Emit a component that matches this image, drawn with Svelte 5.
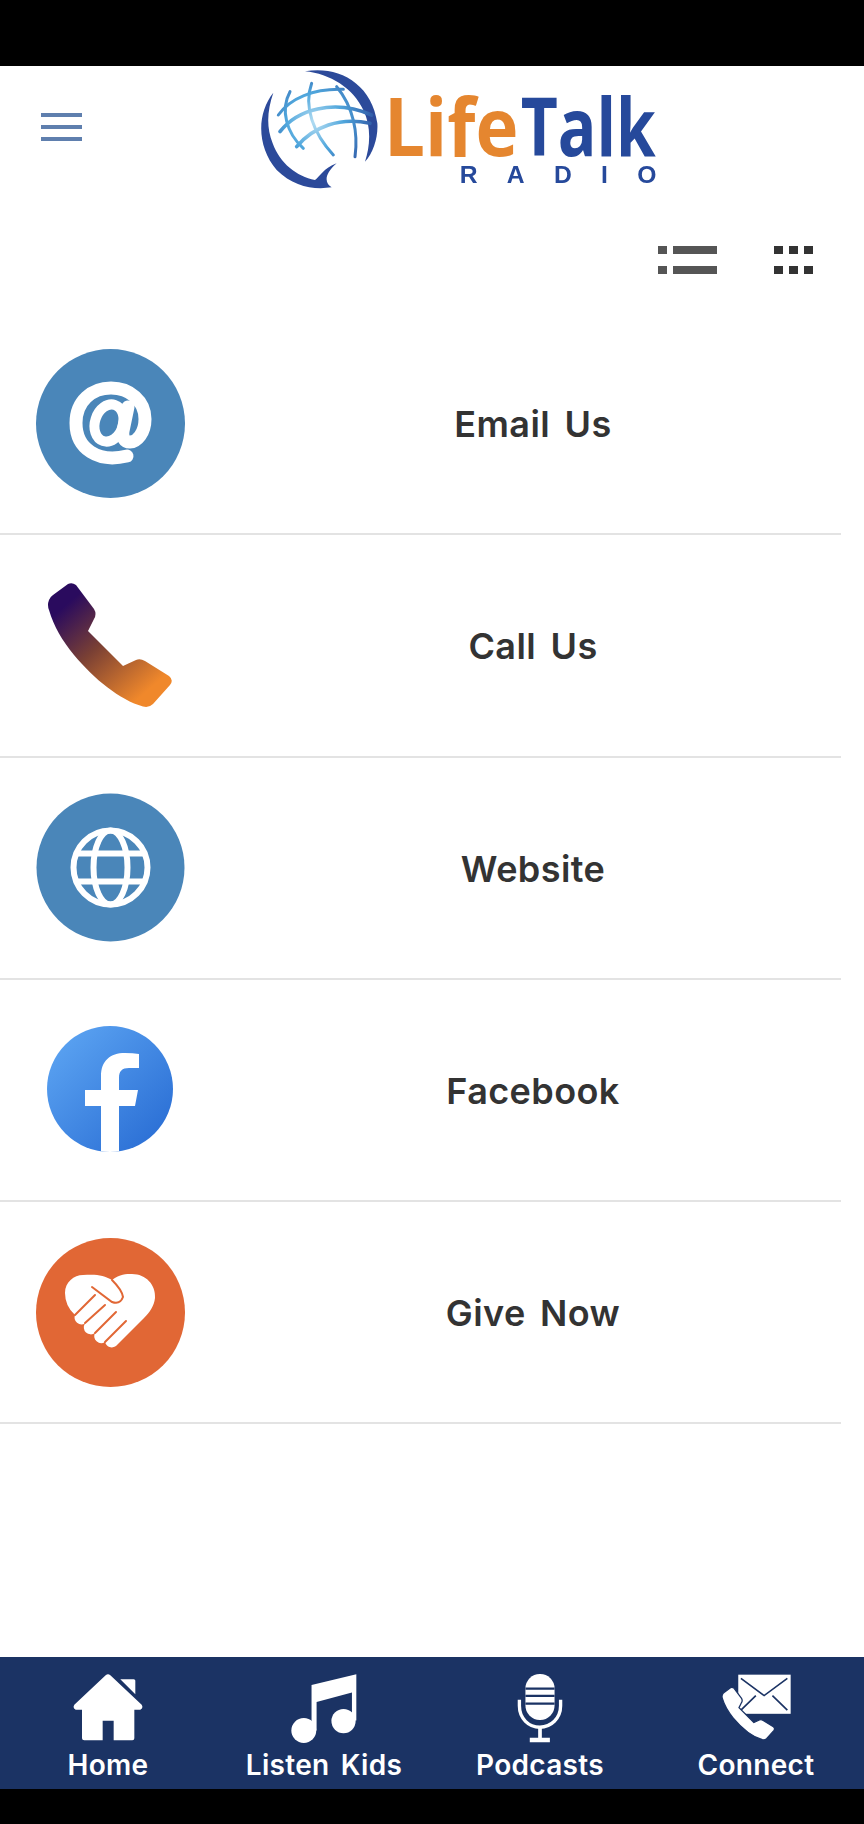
<script lang="ts">
  const rows = [
    { label: 'Email Us', icon: 'email' },
    { label: 'Call Us', icon: 'phone' },
    { label: 'Website', icon: 'web' },
    { label: 'Facebook', icon: 'fb' },
    { label: 'Give Now', icon: 'give' },
  ];
  const tabs = [
    { label: 'Home', icon: 'home' },
    { label: 'Listen Kids', icon: 'music' },
    { label: 'Podcasts', icon: 'mic' },
    { label: 'Connect', icon: 'connect' },
  ];
  const handset =
    'M20 1Q24 -1 28 2L46 26Q49 31 46 36L40 48L75 83L88 77Q92 75 97 78L121 93Q126 97 122 102L105 121Q101 125 95 123.5C72 117 46 96 26 72C14 57 6 44 1 27Q-1 22 1 17Q2 14 5 12Z';
</script>

<div class="page">
  <div class="status"></div>

  <header>
    <div class="burger"><span></span><span></span><span></span></div>
    <svg class="logo" width="440" height="134" viewBox="0 18 1320 402">
      <defs>
        <radialGradient id="grid" gradientUnits="userSpaceOnUse" cx="225" cy="185" r="190">
          <stop offset="0" stop-color="#b5def3" />
          <stop offset="0.45" stop-color="#4fa6dc" />
          <stop offset="1" stop-color="#2c4f9f" />
        </radialGradient>
      </defs>
      <path fill="#2c4a9a" d="M195 34C290 16 395 66 412 190C415 230 400 280 375 305C390 260 395 200 370 150C340 85 270 41 195 34Z" />
      <path fill="#2c4a9a" d="M100 98C50 160 50 260 110 330C160 380 220 390 275 382C255 370 250 345 290 310C250 325 240 350 225 360C170 350 120 310 98 250C78 200 82 150 100 98Z" />
      <g fill="none" stroke="url(#grid)" stroke-width="9" stroke-linecap="round">
        <path d="M115 165C150 115 220 85 310 88" />
        <path d="M120 215C170 150 280 115 395 165" stroke-width="11" />
        <path d="M170 260C220 200 300 170 390 190" stroke-width="11" />
        <path d="M150 95C120 150 140 220 190 265" />
        <path d="M215 70C190 140 220 220 280 285" />
        <path d="M290 80C340 140 355 220 345 290" />
      </g>
      <text class="word" x="432" y="288" fill="#e5862f" textLength="403" lengthAdjust="spacingAndGlyphs">Life</text>
      <text class="word" x="842" y="288" fill="#26499b" textLength="405" lengthAdjust="spacingAndGlyphs">Talk</text>
      <text class="radio" x="659" y="370" fill="#26499b" textLength="590">RADIO</text>
    </svg>
  </header>

  <div class="toolbar">
    <div class="view-list">
      <span class="dot"></span><span class="bar"></span>
      <span class="dot"></span><span class="bar"></span>
    </div>
    <div class="view-grid">
      {#each Array(6) as _}<span></span>{/each}
    </div>
  </div>

  <ul class="list">
    {#each rows as row}
      <li class="row">
        <div class="thumb">
          {#if row.icon === 'email'}
            <svg width="149" height="149" viewBox="0 0 149 149">
              <circle cx="74.5" cy="74.5" r="74.5" fill="#4a86b9" />
              <g fill="none" stroke="#fff" stroke-width="13" stroke-linecap="round">
                <path d="M91 107C62 114 40 100 40 74C40 52 56 39 75 39C94 39 109 52 109 70C109 84 101 93 94 93C88 93 86 88 87 82L92 58" />
                <ellipse cx="73" cy="74" rx="14" ry="19" transform="rotate(18 73 74)" stroke-width="10" />
              </g>
            </svg>
          {:else if row.icon === 'phone'}
            <svg width="124" height="124" viewBox="0 0 124 124">
              <defs>
                <linearGradient id="call" x1="0.15" y1="0.1" x2="0.85" y2="0.9">
                  <stop offset="0.05" stop-color="#2a0b5e" />
                  <stop offset="0.45" stop-color="#7a4034" />
                  <stop offset="0.95" stop-color="#f0882b" />
                </linearGradient>
              </defs>
              <path d={handset} fill="url(#call)" />
            </svg>
          {:else if row.icon === 'web'}
            <svg width="149" height="149" viewBox="0 0 149 149">
              <circle cx="74.5" cy="74.5" r="74" fill="#4a86b9" />
              <g fill="none" stroke="#fff" stroke-width="6">
                <circle cx="74.5" cy="74.5" r="37" />
                <ellipse cx="74.5" cy="74.5" rx="17" ry="37" />
                <path d="M41 60.5H108M41 88.5H108" />
              </g>
            </svg>
          {:else if row.icon === 'fb'}
            <svg class="fb" width="126" height="126" viewBox="0 0 126 126">
              <defs>
                <linearGradient id="fb" x1="0.1" y1="0.1" x2="0.9" y2="0.9">
                  <stop offset="0" stop-color="#5aa2f1" />
                  <stop offset="1" stop-color="#2b6fd5" />
                </linearGradient>
                <clipPath id="fbclip"><circle cx="63" cy="63" r="63" /></clipPath>
              </defs>
              <circle cx="63" cy="63" r="63" fill="url(#fb)" />
              <path clip-path="url(#fbclip)" fill="#fff" d="M54 126V80H38V64H54V50C54 35 63 27 78 27Q86 27 92 28V42H82C75 42 72 45 72 52V64H91L88 80H72V126Z" />
            </svg>
          {:else}
            <svg width="149" height="149" viewBox="0 0 149 149">
              <circle cx="74.5" cy="74.5" r="74.5" fill="#e16735" />
              <path fill="#fff" d="M76 42C84 36 90 36 96 36C110 36 120 47 119 60C118 68 114 74 108 80L80 108A7 7 0 0 1 69 104A7 7 0 0 1 59 95A7 7 0 0 1 49 85.5A7 7 0 0 1 39 77Q29 68 29 55C29 44 38 37 47 37C60 36 68 37 76 42Z" />
              <g fill="none" stroke="#e16735" stroke-width="2" stroke-linecap="round">
                <path d="M39 77L59 57M49 85L69 67M59 95L80 74M69 104L90 83" />
                <path d="M56 49L76 64Q84 67 87 59Q86 52 76 42" />
              </g>
            </svg>
          {/if}
        </div>
        <span class="label">{row.label}</span>
      </li>
    {/each}
  </ul>

  <div class="spacer"></div>

  <nav>
    {#each tabs as tab}
      <div class="tab">
        <div class="tab-icon">
          {#if tab.icon === 'home'}
            <svg width="70" height="67" viewBox="218 105 210 200">
              <path fill="#fff" d="M316 108Q323 103 330 108L424 197Q430 207 420 212H402V297Q402 303 396 303H340V245H307V303H252Q245 303 245 297V212H226Q216 207 222 197Z" />
              <path fill="#fff" d="M360 120H400Q405 120 405 125V165Z" />
            </svg>
          {:else if tab.icon === 'music'}
            <svg width="66" height="70" viewBox="874 103 196 206">
              <path fill="#fff" d="M935 135L1068 103V240H1055V157L950 185V270H935Z" />
              <circle cx="912" cy="270" r="37" fill="#fff" />
              <circle cx="1030" cy="242" r="36" fill="#fff" />
            </svg>
          {:else if tab.icon === 'mic'}
            <svg width="46" height="69" viewBox="255 103 137 206">
              <rect x="280" y="103" width="87" height="137" rx="43" fill="#fff" />
              <path fill="#1b3364" d="M280 143H367V150H280ZM280 165H367V172H280ZM280 188H367V195H280Z" />
              <path fill="none" stroke="#fff" stroke-width="10" d="M262 180V198C262 236 290 262 323 262C356 262 385 236 385 198V180" />
              <path fill="#fff" d="M318 262H329V293H353V307H293V293H318Z" />
            </svg>
          {:else}
            <svg width="69" height="66" viewBox="868 105 208 199">
              <rect x="917" y="107" width="158" height="118" fill="#fff" />
              <path fill="none" stroke="#1b3364" stroke-width="5" d="M925 118L995 170L1065 118M925 214L970 170M1065 214L1020 170" />
              <path d={handset} transform="translate(868 145) scale(1.28)" fill="#fff" stroke="#1b3364" stroke-width="3" />
            </svg>
          {/if}
        </div>
        <span class="tab-label">{tab.label}</span>
      </div>
    {/each}
  </nav>
  <div class="softkeys"></div>
</div>

<style>
  :global(body) {
    margin: 0;
    background: #fff;
  }

  .page {
    width: 864px;
    height: 1824px;
    display: flex;
    flex-direction: column;
    background: #fff;
    font-family: 'Inter', sans-serif;
    overflow: hidden;
  }

  .status {
    height: 66px;
    background: #000;
  }

  header {
    height: 134px;
    display: flex;
    align-items: flex-start;
  }

  .burger {
    margin: 47px 0 0 41px;
    width: 41px;
    display: flex;
    flex-direction: column;
    gap: 8px;
  }

  .burger span {
    height: 4px;
    background: #5f7fae;
  }

  .logo {
    margin-left: 158px;
    filter: blur(0.6px);
  }

  .word {
    font-family: 'Open Sans', sans-serif;
    font-weight: 700;
    font-size: 240px;
  }

  .radio {
    font-family: 'Liberation Sans', sans-serif;
    font-weight: 700;
    font-size: 74px;
  }

  .toolbar {
    height: 113px;
    box-sizing: border-box;
    padding: 46px 51px 0 0;
    display: flex;
    justify-content: flex-end;
    align-items: flex-start;
    gap: 57px;
  }

  .view-list {
    display: grid;
    grid-template-columns: 9px 44px;
    column-gap: 6px;
    row-gap: 12px;
  }

  .view-list span {
    height: 8px;
    background: #555;
  }

  .view-grid {
    display: grid;
    grid-template-columns: repeat(3, 9px);
    column-gap: 6px;
    row-gap: 12px;
  }

  .view-grid span {
    height: 8px;
    background: #333;
  }

  .list {
    list-style: none;
    margin: 0;
    padding: 0;
    width: 841px;
  }

  .row {
    height: 222.25px;
    box-sizing: border-box;
    border-bottom: 2px solid #e3e3e3;
    display: flex;
    align-items: center;
  }

  .thumb {
    width: 149px;
    margin-left: 35.5px;
    display: flex;
    justify-content: center;
    flex-shrink: 0;
  }

  .thumb svg {
    display: block;
  }

  .thumb svg.fb {
    margin-bottom: 2px;
  }

  .label {
    flex: 1;
    margin-left: 40.5px;
    padding-top: 2px;
    text-align: center;
    font-size: 36px;
    font-weight: 600;
    letter-spacing: 0.4px;
    word-spacing: 5px;
    color: #333;
  }

  .spacer {
    flex: 1;
  }

  nav {
    height: 132px;
    box-sizing: border-box;
    padding-top: 17px;
    background: #1b3364;
    display: grid;
    grid-template-columns: repeat(4, 1fr);
  }

  .tab {
    display: flex;
    flex-direction: column;
    align-items: center;
  }

  .tab-icon {
    height: 70px;
  }

  .tab-icon svg {
    display: block;
  }

  .tab-label {
    margin-top: 2px;
    font-size: 28px;
    line-height: 38px;
    font-weight: 600;
    letter-spacing: 0.3px;
    word-spacing: 4px;
    color: #fff;
  }

  .softkeys {
    height: 35px;
    background: #000;
  }
</style>
